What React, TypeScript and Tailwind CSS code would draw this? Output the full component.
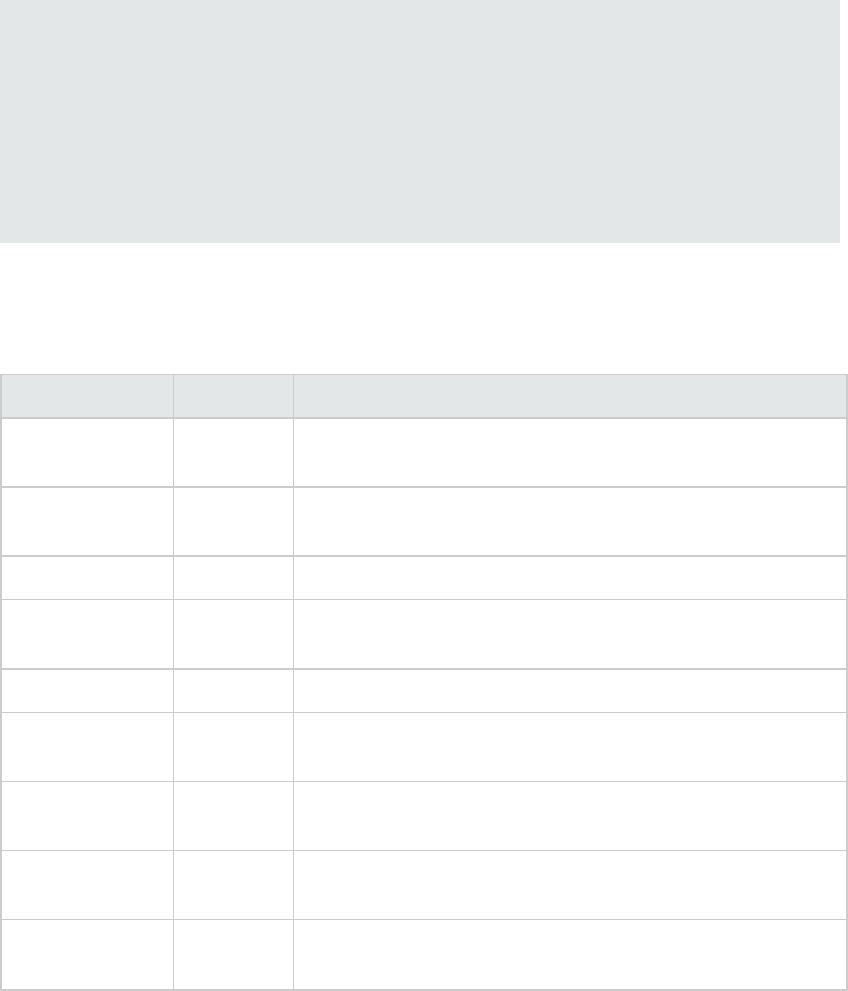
const rows = [
  {h: 'h-[69px]', b: 'border-b-2'},
  {h: 'h-[69px]', b: 'border-b-2'},
  {h: 'h-[43px]', b: 'border-b'},
  {h: 'h-[70px]', b: 'border-b-2'},
  {h: 'h-[43px]', b: 'border-b'},
  {h: 'h-[69px]', b: 'border-b'},
  {h: 'h-[69px]', b: 'border-b'},
  {h: 'h-[69px]', b: 'border-b'},
  {h: 'h-[69px]', b: ''},
];

const Row = ({className}: {className: string}) => (
  <div className={`grid grid-cols-[172px_120px_1fr] border-[#cccccc] ${className}`}>
    <div className="border-r border-[#cccccc]" />
    <div className="border-r border-[#cccccc]" />
    <div />
  </div>
);

export default function App() {
  return (
    <div className="w-[848px] min-h-[991px] bg-white font-['Liberation_Sans',sans-serif]">
      <div className="h-[243px] w-[840px] bg-[#e3e7e8]" />
      <div className="mt-[131px] border-t border-x-2 border-b-2 border-[#cccccc]">
        <Row className="h-[44px] bg-[#e3e7e8] border-b-2" />
        {rows.map((r, i) => (
          <Row key={i} className={`${r.h} ${r.b}`} />
        ))}
      </div>
    </div>
  );
}
